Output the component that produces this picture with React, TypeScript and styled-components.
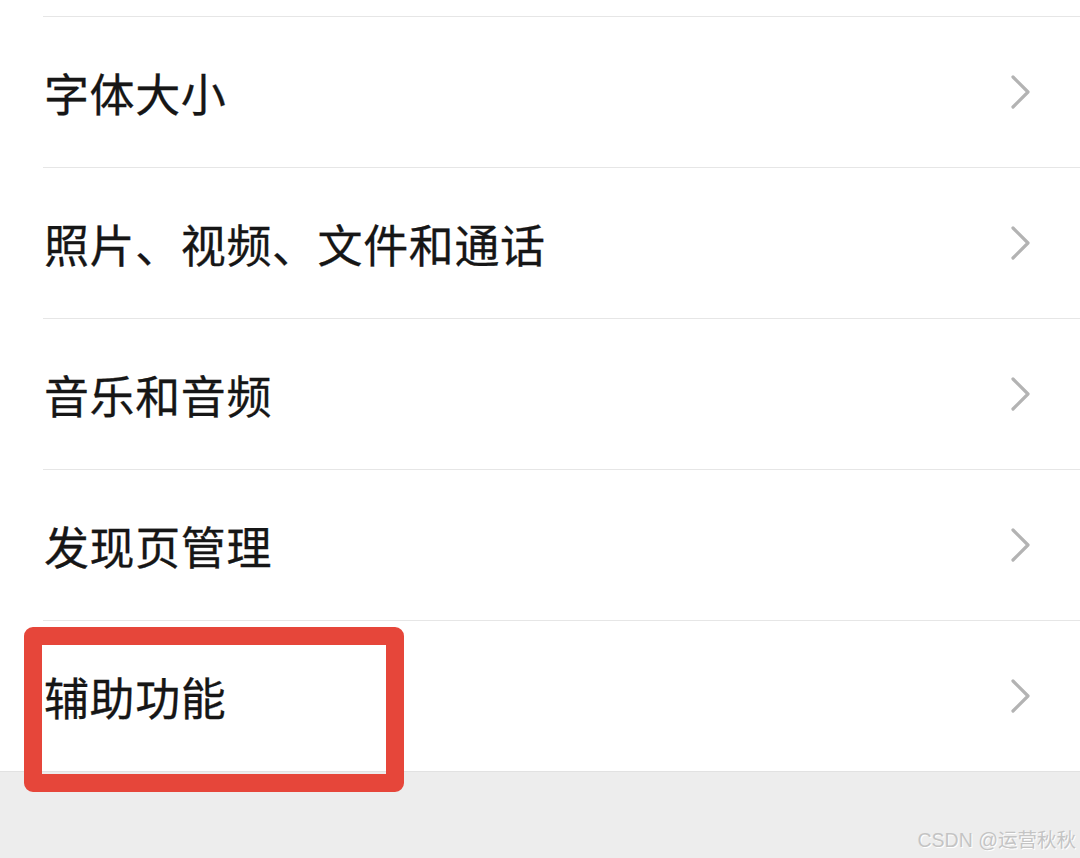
import React from 'react'
import styled, { createGlobalStyle } from 'styled-components'

const items = ['字体大小', '照片、视频、文件和通话', '音乐和音频', '发现页管理', '辅助功能']

const GlobalStyle = createGlobalStyle`
  html, body {
    margin: 0;
    padding: 0;
    background: #ffffff;
  }
  body {
    font-family: "Noto Sans CJK SC", "Noto Sans", sans-serif;
  }
`

const Chevron = () => (
  <svg width="22" height="36" viewBox="0 0 22 36">
    <path d="M3 3 L18 18 L3 33" fill="none" stroke="#b3b3b3" strokeWidth="3.2" strokeLinecap="round" strokeLinejoin="round" />
  </svg>
)

const App = () => {
  return (
    <Page>
      <GlobalStyle />
      <TopGap />
      <List>
        {items.map((label) => (
          <Row key={label}>
            <RowInner>
              <Label>{label}</Label>
              <Chevron />
            </RowInner>
          </Row>
        ))}
      </List>
      <Footer>
        <Watermark>CSDN @运营秋秋</Watermark>
      </Footer>
      <Highlight />
    </Page>
  )
}

const Page = styled.div`
  position: relative;
  width: 1080px;
  height: 858px;
  overflow: hidden;
  background: #ffffff;
  display: flex;
  flex-direction: column;
`

const TopGap = styled.div`
  height: 16px;
`

const List = styled.div`
  display: flex;
  flex-direction: column;
`

const Row = styled.div`
  height: 151px;
  padding-left: 43px;
  box-sizing: border-box;
`

const RowInner = styled.div`
  height: 100%;
  border-top: 1.5px solid #e6e6e6;
  box-sizing: border-box;
  display: flex;
  align-items: center;
  justify-content: space-between;
  padding-right: 48px;
  padding-left: 1px;
`

const Label = styled.span`
  font-size: 45px;
  color: #161616;
  letter-spacing: 0.6px;
  -webkit-text-stroke: 0.3px #161616;
`

const Footer = styled.div`
  flex: 1;
  background: #ededed;
  border-top: 1px solid #e2e2e2;
  display: flex;
  align-items: flex-end;
  justify-content: flex-end;
  padding: 0 4px 5px 0;
`

const Watermark = styled.span`
  font-family: "Liberation Sans", "Noto Sans CJK SC", sans-serif;
  font-size: 19.5px;
  color: #c4c4c4;
  text-shadow: 1px 1px 0 #ffffff;
`

const Highlight = styled.div`
  position: absolute;
  left: 24px;
  top: 627px;
  width: 380px;
  height: 165px;
  box-sizing: border-box;
  border: 18px solid #e6463a;
  border-radius: 9px;
  pointer-events: none;
`

export default App
